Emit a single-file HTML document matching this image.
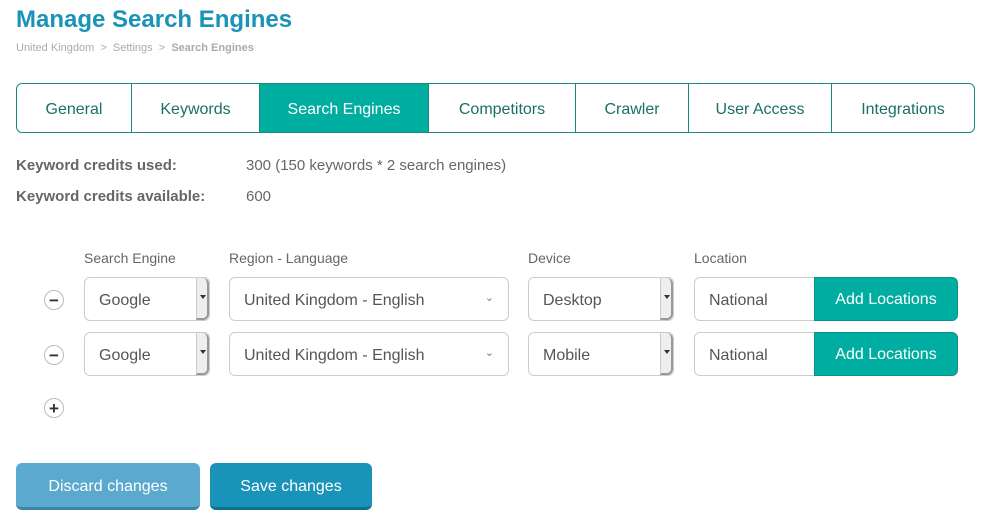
<!DOCTYPE html>
<html><head><style>
body{margin:0;width:981px;height:526px;background:#fff;font-family:"Liberation Sans",sans-serif;position:relative;overflow:hidden}
.a{position:absolute}
h1{position:absolute;left:16px;top:6px;margin:0;font-size:24px;font-weight:bold;color:#1a93b8}
.bc{left:16px;top:42px;font-size:11px;color:#aaa}
.tabs{left:16px;top:83px;width:957px;height:48px;border:1px solid #1a8a80;border-radius:6px;display:flex;overflow:hidden}
.tabs div{border-right:1px solid #1a8a80;display:flex;align-items:center;justify-content:center;font-size:16px;color:#1a6f68;padding-top:3px}
.tabs div:last-child{border-right:none}
.tabs .on{background:#00ada1;color:#fff}
.lbl{font-size:15px;font-weight:bold;color:#666}
.val{font-size:15px;color:#666}
.hd{font-size:14px;color:#666;top:250px}
.sel{border:1px solid #ccc;border-radius:6px;height:44px;box-sizing:border-box;font-size:16px;color:#555;display:flex;align-items:center;padding-left:14px;padding-top:4px}
.arr{position:absolute;right:0;top:0;width:13px;height:42px;background:#eee;border-left:1px solid #ccc;border-right:2px solid #999;border-bottom:2px solid #999;border-radius:0 6px 6px 0;box-sizing:border-box}
.arr:after{content:"";position:absolute;left:3px;top:17px;border:3px solid transparent;border-top:4px solid #333}
.circ{width:20px;height:20px;border:1px solid #bbb;border-radius:50%;box-sizing:border-box;font-size:17px;font-weight:bold;color:#333;display:flex;align-items:center;justify-content:center;line-height:1}
.btn{background:#00ada1;color:#fff;font-size:16px;display:flex;align-items:center;justify-content:center;border-radius:0 6px 6px 0;border:1px solid #0a9489;box-sizing:border-box;padding-top:2px}
.b2{height:47px;border-radius:6px;color:#fff;font-size:16px;display:flex;align-items:center;justify-content:center;box-sizing:border-box;padding-top:3px}
</style></head><body>
<h1>Manage Search Engines</h1>
<div class="a bc">United Kingdom &nbsp;&gt;&nbsp; Settings &nbsp;&gt;&nbsp; <b>Search Engines</b></div>
<div class="a tabs">
<div style="width:114px">General</div><div style="width:127px">Keywords</div><div class="on" style="width:168px">Search Engines</div><div style="width:146px">Competitors</div><div style="width:112px">Crawler</div><div style="width:142px">User Access</div><div style="flex:1">Integrations</div>
</div>
<div class="a lbl" style="left:16px;top:157px">Keyword credits used:</div>
<div class="a val" style="left:246px;top:157px">300 (150 keywords * 2 search engines)</div>
<div class="a lbl" style="left:16px;top:188px">Keyword credits available:</div>
<div class="a val" style="left:246px;top:188px">600</div>
<div class="a hd" style="left:84px">Search Engine</div>
<div class="a hd" style="left:229px">Region - Language</div>
<div class="a hd" style="left:528px">Device</div>
<div class="a hd" style="left:694px">Location</div>

<div class="a circ" style="left:44px;top:290px">−</div>
<div class="a sel" style="left:84px;top:277px;width:126px">Google<span class="arr"></span></div>
<div class="a sel" style="left:229px;top:277px;width:280px">United Kingdom - English<span class="a" style="right:14px;top:13px;font-size:11px;color:#777">&#8964;</span></div>
<div class="a sel" style="left:528px;top:277px;width:146px">Desktop<span class="arr"></span></div>
<div class="a sel" style="left:694px;top:277px;width:125px;border-radius:6px 0 0 6px">National</div>
<div class="a btn" style="left:814px;top:277px;width:144px;height:44px">Add Locations</div>

<div class="a circ" style="left:44px;top:345px">−</div>
<div class="a sel" style="left:84px;top:332px;width:126px">Google<span class="arr"></span></div>
<div class="a sel" style="left:229px;top:332px;width:280px">United Kingdom - English<span class="a" style="right:14px;top:13px;font-size:11px;color:#777">&#8964;</span></div>
<div class="a sel" style="left:528px;top:332px;width:146px">Mobile<span class="arr"></span></div>
<div class="a sel" style="left:694px;top:332px;width:125px;border-radius:6px 0 0 6px">National</div>
<div class="a btn" style="left:814px;top:332px;width:144px;height:44px">Add Locations</div>

<div class="a circ" style="left:44px;top:398px">+</div>

<div class="a b2" style="left:16px;top:463px;width:184px;background:#5ca9cf;border-bottom:3px solid #3a86a8">Discard changes</div>
<div class="a b2" style="left:210px;top:463px;width:162px;background:#1a93b8;border-bottom:3px solid #0e6f8a">Save changes</div>
</body></html>
